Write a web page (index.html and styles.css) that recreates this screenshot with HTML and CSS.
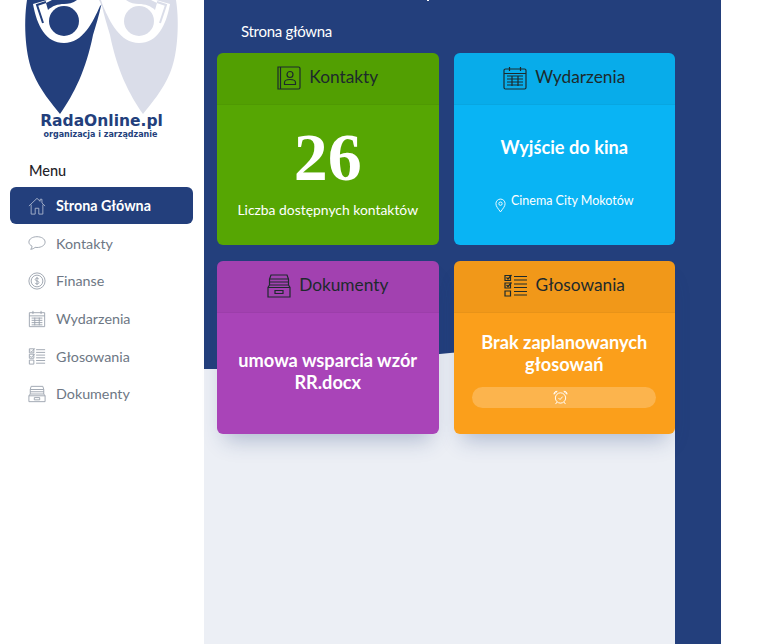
FILE: index.html
```html
<!DOCTYPE html>
<html lang="pl">
<head>
    <meta charset="UTF-8">
    <meta name="viewport" content="width=device-width, initial-scale=1.0">
    <title>RadaOnline.pl - Strona główna</title>
    <link rel="stylesheet" href="styles.css">
</head>
<body>
    <div class="page">
        <aside class="sidebar">
            <div class="logo">
                <svg class="logo-mark" width="204" height="114" viewBox="0 0 204 114">
                    <!-- blue figure -->
                    <g class="figure-blue">
                        <path class="drop" d="M27 0C23 25 26 58 33 73C40 90 52 104 60 114C74 94 86 70 93 35C96 25 99 15 101 6L104 0Z"/>
                        <path class="body" d="M33 4L47 0H106L100 6C93 22 83 43 64 43C46 43 37 26 33 4Z"/>
                        <path class="drop" d="M46 3L52 0H77C73 3 68 4 64 4C58 4 52 6 48 10Z"/>
                        <path class="tassel" d="M46 2L37 5L43 23"/>
                        <circle class="drop" cx="64" cy="21" r="15"/>
                    </g>
                    <!-- grey figure, same shape mirrored -->
                    <g class="figure-grey" transform="translate(203 0) scale(-1 1)">
                        <path class="drop" d="M27 0C23 25 26 58 33 73C40 90 52 104 60 114C74 94 86 70 93 35C96 25 99 15 101 6L104 0Z"/>
                        <path class="body" d="M33 4L47 0H102L100 6C93 22 83 43 64 43C46 43 37 26 33 4Z"/>
                        <path class="drop" d="M46 3L52 0H77C73 3 68 4 64 4C58 4 52 6 48 10Z"/>
                        <path class="tassel" d="M46 2L37 5L43 23"/>
                        <circle class="drop" cx="64" cy="21" r="15"/>
                    </g>
                </svg>
                <div class="logo-name">RadaOnline.pl</div>
                <div class="logo-sub">organizacja i zarządzanie</div>
            </div>
            <h3 class="menu-title">Menu</h3>
            <nav class="menu">
                <a class="menu-item active">
                    <svg class="menu-icon" viewBox="0 0 20 20"><path d="M1 10L10 1.5L13.5 4.8V2.5H15.5V6.7L19 10M3.5 8.5V19H8V12.5H12V19H16.500V8.500"/></svg>
                    Strona Główna
                </a>
                <a class="menu-item">
                    <svg class="menu-icon" viewBox="0 0 20 20"><path d="M10 3C5 3 1 5.500 1 9C1 11 2.500 12.500 4.500 13.500C4.400 15 3.800 16.200 3 17C5 16.800 6.800 16 7.800 14.800C8.500 14.900 9.200 15 10 15C15 15 19 12.500 19 9C19 5.500 15 3 10 3Z"/></svg>
                    Kontakty
                </a>
                <a class="menu-item">
                    <svg class="menu-icon" viewBox="0 0 20 20"><circle cx="10" cy="10" r="9"/><circle cx="10" cy="10" r="6.500"/><path d="M12 7.800C11.500 7 10.800 6.800 10 6.800C8.800 6.800 8 7.500 8 8.400C8 10.500 12.200 9.500 12.200 11.700C12.200 12.600 11.200 13.300 10 13.300C9 13.300 8.200 12.900 7.800 12.100M10 5.500V14.500"/></svg>
                    Finanse
                </a>
                <a class="menu-item">
                    <svg class="menu-icon" viewBox="0 0 20 20"><path d="M1.500 3H18.500V18.500H1.500ZM1.500 6.500H18.500M5.500 1V4.500M14.500 1V4.500M4 9H16M4 11.500H16M4 14H16M4 16.500H16M7.500 8.500V17M12.500 8.500V17"/></svg>
                    Wydarzenia
                </a>
                <a class="menu-item">
                    <svg class="menu-icon" viewBox="0 0 20 20"><path d="M1.500 2H6.500V6.500H1.500ZM1.500 8H6.500V12.500H1.500ZM1.500 14.500H6.500V19H1.500ZM9 3H19M9 6H19M9 9H19M9 12H19M9 15H19M9 18H19M2.500 4L4 5.500L7.500 1.500M2.500 10L4 11.500L7.500 7.500"/></svg>
                    Głosowania
                </a>
                <a class="menu-item">
                    <svg class="menu-icon" viewBox="0 0 20 20"><path d="M3.500 1.500H16.500L17.500 5V10H2.500V5ZM2.500 5H17.500M2.500 7.500H17.500M2.500 10L1 12V18.500H19V12L17.500 10M1 12H19M7 14H13V16.500H7Z"/></svg>
                    Dokumenty
                </a>
            </nav>
        </aside>

        <main class="main">
            <svg class="wave" width="471" height="644" viewBox="0 0 471 644" preserveAspectRatio="none">
                <path fill="#eceff5" d="M0 369C90 369 170 360 246 353C320 346 400 340 471 330V644H0Z"/>
            </svg>
            <span class="cut-text"></span>
            <h1 class="page-title">Strona główna</h1>
            <div class="cards">
                <section class="card green">
                    <header class="card-head">
                        <svg class="card-icon" viewBox="0 0 24 24"><path d="M1 1H21.500C22.300 1 23 1.700 23 2.500V21.500C23 22.300 22.300 23 21.500 23H1ZM3.500 1V23"/><circle cx="13" cy="8.500" r="3"/><path d="M7.500 18.500V16.500C7.500 14.500 10 13.500 13 13.500C16 13.500 18.500 14.500 18.500 16.500V18.500Z"/></svg>
                        Kontakty
                    </header>
                    <div class="card-body">
                        <div class="big-number">26</div>
                        <p class="card-note">Liczba dostępnych kontaktów</p>
                    </div>
                </section>

                <section class="card blue">
                    <header class="card-head">
                        <svg class="card-icon" viewBox="0 0 24 24"><path d="M2.500 3H21.500C22.300 3 23 3.700 23 4.500V21.500C23 22.300 22.300 23 21.500 23H2.500C1.700 23 1 22.300 1 21.500V4.500C1 3.700 1.700 3 2.500 3ZM1 7.500H23M6.500 1V5M17.500 1V5M4 10H20M4 13H20M4 16H20M4 19H20M9 9.500V20M15 9.500V20"/></svg>
                        Wydarzenia
                    </header>
                    <div class="card-body event-body">
                        <p class="card-text">Wyjście do kina</p>
                        <p class="event-place">
                            <svg class="pin" viewBox="0 0 12 16"><path d="M6 15C3.500 11.500 1 9 1 6C1 3.200 3.200 1 6 1C8.800 1 11 3.200 11 6C11 9 8.500 11.500 6 15Z"/><circle cx="6" cy="6" r="1.800"/></svg>
                            <span>Cinema City Mokotów</span>
                        </p>
                    </div>
                </section>

                <section class="card purple">
                    <header class="card-head">
                        <svg class="card-icon" viewBox="0 0 24 24"><path d="M4 1H20L21.500 5V11H2.500V5ZM2.500 5H21.500M2.500 8H21.500M2.500 11L1 13.500V23H23V13.500L21.500 11M1 13.500H23M8 16.500H16V19.500H8Z"/></svg>
                        Dokumenty
                    </header>
                    <div class="card-body doc-body">
                        <p class="card-text">umowa wsparcia wzór RR.docx</p>
                    </div>
                </section>

                <section class="card orange">
                    <header class="card-head">
                        <svg class="card-icon" viewBox="0 0 24 24"><path d="M1 1.500H6.500V6.500H1ZM1 9H6.500V14H1ZM1 17H6.500V22H1ZM10 2.500H23M10 6H23M10 10H23M10 13.500H23M10 17.500H23M10 21H23"/><path d="M2.500 3.500L4 5L7.500 1M2.500 11L4 12.500L7.500 8.500"/></svg>
                        Głosowania
                    </header>
                    <div class="card-body vote-body">
                        <p class="card-text">Brak zaplanowanych głosowań</p>
                        <div class="vote-pill">
                            <svg class="alarm" viewBox="0 0 16 16"><circle cx="8" cy="8.500" r="5.500"/><path d="M5.800 8.500L7.500 10.200L10.300 7M1 4.500C1 2.500 2.500 1 4.500 1.500ZM15 4.500C15 2.500 13.500 1 11.500 1.500ZM4 13L2.800 15M12 13L13.200 15"/></svg>
                        </div>
                    </div>
                </section>
            </div>
        </main>
    </div>
</body>
</html>
```

FILE: styles.css
```css
/* General */
body {
    margin: 0;
    background: #fff;
    font-family: 'Lato', sans-serif;
    overflow: hidden;
}

.page {
    display: flex;
    width: 721px;
    height: 644px;
    overflow: hidden;
}

/* Sidebar */
.sidebar {
    width: 204px;
    flex-shrink: 0;
    background: #fff;
}

.logo {
    height: 138px;
    text-align: center;
}

.logo-mark {
    display: block;
}

.figure-blue .drop { fill: #233f7c; }
.figure-grey .drop { fill: #dadde9; }
.body { fill: #fff; }

.tassel {
    fill: none;
    stroke-width: 2;
}

.figure-blue .tassel { stroke: #233f7c; }
.figure-grey .tassel { stroke: #dadde9; }

.logo-name {
    width: 204px;
    font-family: 'DejaVu Sans', sans-serif;
    font-size: 15.500px;
    font-weight: 700;
    line-height: 15px;
    color: #233f7c;
    text-indent: -1px;
}

.logo-sub {
    margin-top: 1px;
    font-family: 'DejaVu Sans', sans-serif;
    font-size: 8px;
    font-weight: 700;
    line-height: 9px;
    color: #233f7c;
    text-indent: -3px;
}

.menu-title {
    margin: 23px 0 7px 29px;
    font-size: 14.500px;
    font-weight: 500;
    line-height: 19px;
    color: #1f2328;
}

.menu {
    display: flex;
    flex-direction: column;
    gap: 0.700px;
    margin: 0 11px 0 10px;
}

.menu-item {
    display: flex;
    align-items: center;
    gap: 10px;
    height: 37px;
    padding-left: 18px;
    border-radius: 6px;
    font-size: 14.300px;
    color: #6d7784;
}

.menu-item.active {
    background: #233f7c;
    color: #fff;
    font-weight: 700;
}

.menu-icon {
    width: 18px;
    height: 18px;
    fill: none;
    stroke: #9aa2ad;
    stroke-width: 1;
}

.active .menu-icon {
    stroke: #aab5cd;
}

/* Main column */
.main {
    position: relative;
    width: 517px;
    background: #233f7c;
}

.wave {
    position: absolute;
    left: 0;
    top: 0;
}

.cut-text {
    position: absolute;
    left: 223px;
    top: 0;
    width: 2px;
    height: 1px;
    background: #fff;
}

.page-title {
    position: relative;
    margin: 0;
    padding: 23px 0 0 37px;
    font-size: 15px;
    font-weight: 400;
    letter-spacing: -0.300px;
    line-height: 17px;
    color: #fff;
}

/* Cards */
.cards {
    position: relative;
    display: grid;
    grid-template-columns: 1fr 1fr;
    grid-template-rows: 192px 173px;
    gap: 16px 15px;
    width: 458px;
    margin: 13px 0 0 13px;
}

.card {
    display: flex;
    flex-direction: column;
    border-radius: 6px;
    overflow: hidden;
    color: #fff;
    text-align: center;
}

.card:nth-child(n+3) {
    box-shadow: 0 14px 20px -8px rgba(35, 63, 124, 0.3);
    overflow: visible;
}

.card-head {
    display: flex;
    align-items: center;
    justify-content: center;
    gap: 8px;
    box-sizing: border-box;
    height: 52px;
    padding-bottom: 4px;
    flex-shrink: 0;
    border-bottom: 1px solid rgba(0, 0, 0, 0.04);
    border-radius: 6px 6px 0 0;
    background: rgba(0, 0, 0, 0.04);
    font-size: 17.300px;
    color: #1d2a2c;
}

.card-icon {
    width: 24px;
    height: 24px;
    margin-top: 2px;
    fill: none;
    stroke: #1d2a2c;
    stroke-width: 1.200;
}

.card-body {
    flex: 1;
    display: flex;
    flex-direction: column;
    align-items: center;
}

.card-text {
    margin: 0;
    padding: 0 15px;
    font-size: 18.200px;
    font-weight: 700;
    line-height: 22px;
}

.green { background: #56a603; }
.blue { background: #09b4f4; }
.purple { background: #a944b8; }
.orange { background: #fb9f1b; }

.big-number {
    margin-top: 18px;
    font-family: 'Liberation Serif', serif;
    font-size: 68px;
    font-weight: 700;
    line-height: 68px;
}

.card-note {
    margin: 10px 0 0;
    font-size: 13.900px;
    line-height: 18px;
}

.event-body {
    padding-top: 31px;
}

.event-place {
    display: flex;
    gap: 5px;
    margin: 36px 0 0;
    font-size: 12.500px;
    line-height: 18px;
}

.event-place span {
    margin-top: -2px;
}

.pin {
    width: 11px;
    height: 15px;
    margin-top: 4px;
    fill: none;
    stroke: #fff;
    stroke-width: 1;
}

.doc-body {
    padding-top: 36px;
}

.vote-body {
    padding-top: 18px;
}

.vote-pill {
    display: flex;
    justify-content: center;
    align-items: center;
    width: 184px;
    height: 21px;
    margin-top: 12px;
    border-radius: 11px;
    background: rgba(255, 255, 255, 0.22);
}

.alarm {
    width: 15px;
    height: 15px;
    margin-right: 8px;
    fill: none;
    stroke: #fff;
    stroke-width: 1;
}
```
